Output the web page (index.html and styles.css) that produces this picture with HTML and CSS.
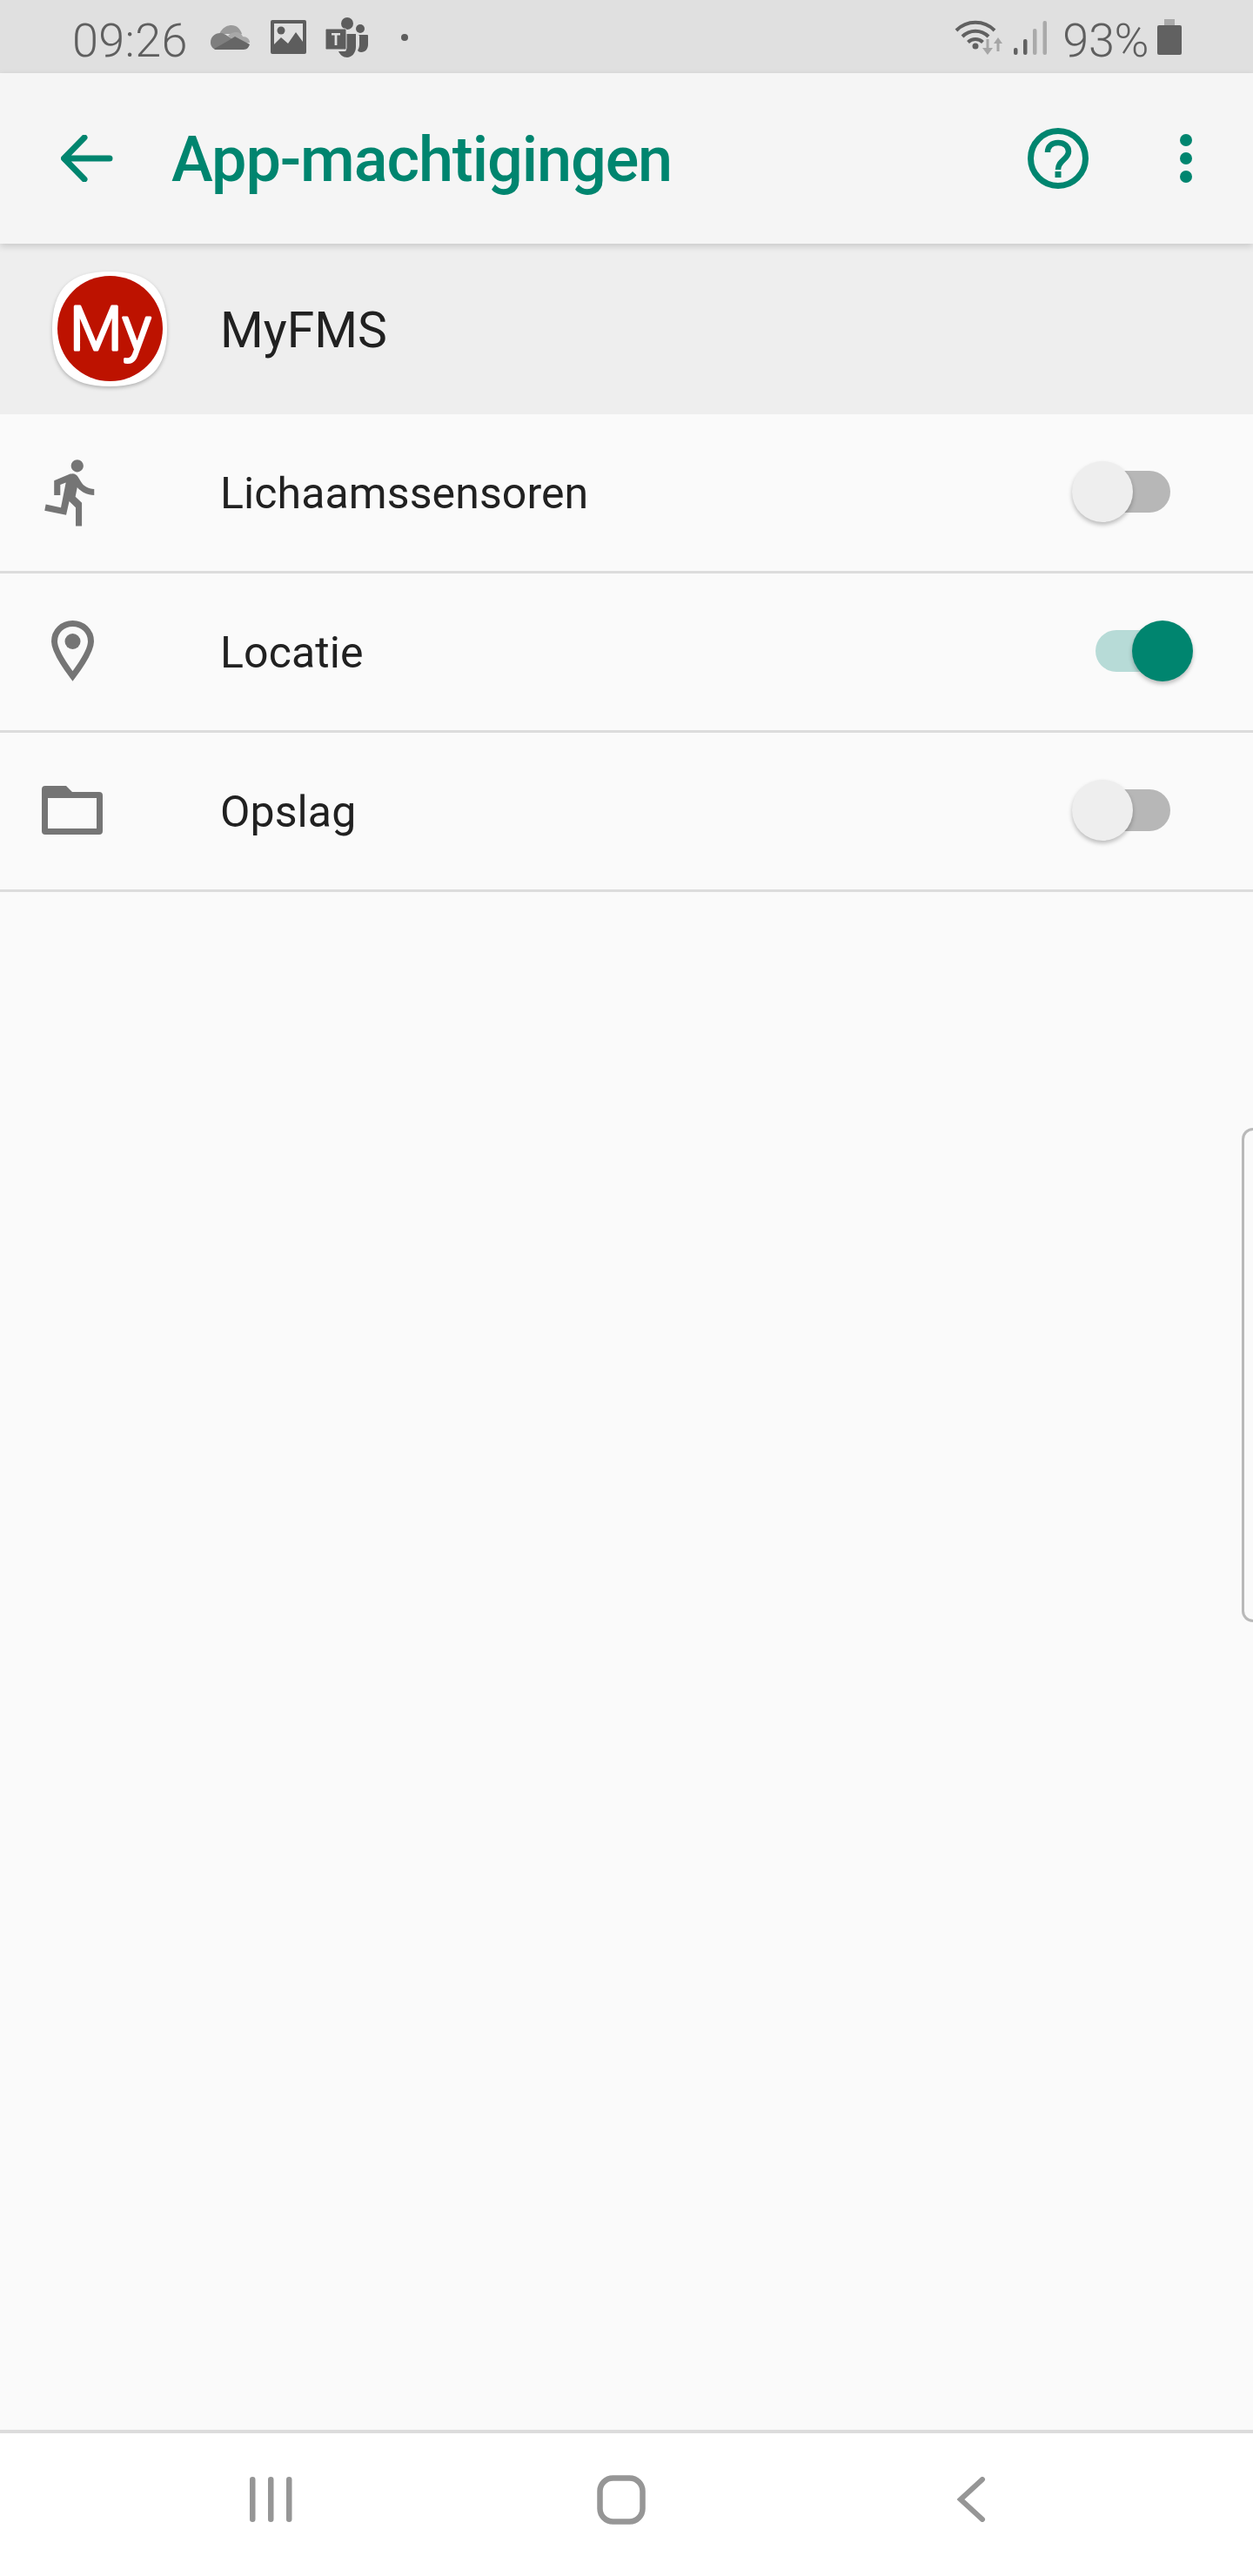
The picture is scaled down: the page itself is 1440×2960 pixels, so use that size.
FILE: index.html
```html
<!DOCTYPE html>
<html lang="nl">
<head>
<meta charset="utf-8">
<title>App-machtigingen</title>
<link rel="stylesheet" href="styles.css">
</head>
<body>
<div class="screen">
  <div class="statusbar">
    <span class="time">09:26</span>
    <svg class="st-cloud" viewBox="0 0 45 28"><path fill="#9a9a9a" d="M10 10C13 3 19 0 24 0c6 0 10 4 12 10z"/><path fill="#7e7e7e" d="M0 20C0 13 5 9 11 9c3 0 5 1 8 3l13 8-12 8H7c-4 0-7-4-7-8z"/><path fill="#a8a8a8" d="M20 12c3-3 6-4 9-4 4 0 7 2 8 5 5 0 8 3 8 7l-13 2z"/><path fill="#666" d="M4 27l16-9 8-5 17 9c-1 3-3 6-7 6H7c-1 0-2 0-3-1z"/></svg>
    <svg class="st-image" viewBox="0 0 41 39"><path fill="#5d5d5d" fill-rule="evenodd" d="M2 0h37a2 2 0 0 1 2 2v35a2 2 0 0 1-2 2H2a2 2 0 0 1-2-2V2a2 2 0 0 1 2-2zM4 4v24l8-8 8 7 9-13 8 11V4z"/><circle cx="12" cy="12" r="4.5" fill="#5d5d5d"/></svg>
    <svg class="st-teams" viewBox="0 0 49 46"><circle cx="25" cy="7" r="7" fill="#5d5d5d"/><circle cx="40" cy="13" r="5" fill="#5d5d5d"/><path fill="#5d5d5d" d="M38 20h10a1 1 0 0 1 1 1v10c0 5-3 9-8 9-2 0-3-1-4-2 1-2 2-4 2-7V21z"/><path fill="#5d5d5d" d="M24 19h11v15c0 7-5 12-10 12-5 0-8-3-10-7h7a2 2 0 0 0 2-2z"/><rect x="0" y="13" width="24" height="24" rx="1.5" fill="#5d5d5d" stroke="#e0e0e0" stroke-width="1"/><path fill="#e0e0e0" d="M7 18h10v2.600h-3.600V32h-2.800V20.600H7z"/></svg>
    <span class="st-dot"></span>
    <div class="status-right">
      <svg class="st-wifi" viewBox="0 0 58 42"><g fill="none" stroke="#616161" stroke-width="4"><path d="M2 13A31 31 0 0 1 46 13"/><path d="M9 20A21 21 0 0 1 39 20"/><path d="M15.500 26.500A12 12 0 0 1 32.500 26.500"/></g><circle cx="24" cy="31" r="3.500" fill="#616161"/><path fill="#a6a6a6" d="M36.500 23h3v10H44l-6 8-6-8h4.500zM48.500 37V28H45l5-7 5 7h-3.500v9z"/></svg>
      <svg class="st-signal" viewBox="0 0 38 39"><rect x="0" y="31" width="4.500" height="8" rx="2" fill="#616161"/><rect x="11" y="21" width="4.500" height="18" rx="2" fill="#616161"/><rect x="22" y="9" width="4.500" height="30" rx="2" fill="#aaa"/><rect x="33.500" y="0" width="4.500" height="39" rx="2" fill="#aaa"/></svg>
      <span class="battery-pct">93%</span>
      <svg class="st-battery" viewBox="0 0 28 41"><path fill="#aaa" d="M8 0h12v7H8z"/><rect y="7" width="28" height="34" rx="2" fill="#616161"/></svg>
    </div>
  </div>

  <header class="toolbar">
    <svg class="tb-back" viewBox="0 0 60 54"><path fill="none" stroke="#00856f" stroke-width="7" stroke-linecap="round" stroke-linejoin="round" d="M56 27H4M27 3L3.500 27 27 51"/></svg>
    <h1 class="title">App-machtigingen</h1>
    <svg class="tb-help" viewBox="0 0 70 70"><circle cx="35" cy="35" r="31.500" fill="none" stroke="#00856f" stroke-width="7"/><path fill="none" stroke="#00856f" stroke-width="6.500" d="M23 28c0-7 5-11 12-11s12 4 12 10c0 9-12 10-12 21"/><rect x="31.500" y="50" width="7" height="7" fill="#00856f"/></svg>
    <div class="tb-more"><span></span><span></span><span></span></div>
  </header>

  <section class="app-head">
    <svg class="app-logo" viewBox="0 0 132 132"><path fill="#fff" d="M66 0C112 0 132 20 132 66S112 132 66 132 0 112 0 66 20 0 66 0z"/><circle cx="66.500" cy="65.500" r="60.500" fill="#bd1200"/><text x="20" y="90" class="logo-text">My</text></svg>
    <span class="app-name">MyFMS</span>
  </section>

  <div class="list">
    <div class="row">
      <div class="row-icon"><svg class="ic-run" viewBox="0 0 24 24"><path fill="#757575" d="M13.490 5.480c1.100 0 2-.9 2-2s-.9-2-2-2-2 .9-2 2 .9 2 2 2zm-3.600 13.900l1-4.400 2.100 2v6h2v-7.500l-2.100-2 .6-3c1.300 1.500 3.300 2.500 5.500 2.500v-2c-1.900 0-3.500-1-4.300-2.400l-1-1.600c-.4-.6-1-1-1.700-1-.3 0-.5.100-.8.100l-5.200 2.200v4.700h2v-3.400l1.800-.7-1.600 8.100-4.900-1-.4 2 7 1.400z"/></svg></div>
      <span class="row-label">Lichaamssensoren</span>
      <div class="switch"><span class="track"></span><span class="thumb"></span></div>
    </div>
    <div class="row">
      <div class="row-icon"><svg class="ic-pin" viewBox="0 0 49 70"><path fill="none" stroke="#757575" stroke-width="7" stroke-miterlimit="8" d="M24.500 3.500C13 3.500 3.500 12 3.500 24c0 10 10.500 26 21 40 10.500-14 21-30 21-40 0-12-9.500-20.500-21-20.500z"/><circle cx="24.500" cy="24" r="9" fill="#757575"/></svg></div>
      <span class="row-label">Locatie</span>
      <div class="switch on"><span class="track"></span><span class="thumb"></span></div>
    </div>
    <div class="row">
      <div class="row-icon"><svg class="ic-folder" viewBox="0 0 70 56"><path fill="#757575" fill-rule="evenodd" d="M4 0h24l7 7h31a4 4 0 0 1 4 4v41a4 4 0 0 1-4 4H4a4 4 0 0 1-4-4V4a4 4 0 0 1 4-4zM7 14v35h56V14z"/></svg></div>
      <span class="row-label">Opslag</span>
      <div class="switch"><span class="track"></span><span class="thumb"></span></div>
    </div>
  </div>

  <div class="edge-handle"></div>

  <nav class="navbar">
    <svg class="nav-recent" viewBox="0 0 49 52"><g fill="#969696"><rect width="6.500" height="52" rx="3.200"/><rect x="21" width="6.500" height="52" rx="3.200"/><rect x="42" width="6.500" height="52" rx="3.200"/></g></svg>
    <svg class="nav-home" viewBox="0 0 56 57"><rect x="3.500" y="3.500" width="49" height="50" rx="15" fill="none" stroke="#969696" stroke-width="6.500"/></svg>
    <svg class="nav-back" viewBox="0 0 33 52"><path fill="none" stroke="#969696" stroke-width="6" stroke-linecap="round" stroke-linejoin="miter" d="M29 3L4 26l25 23"/></svg>
  </nav>
</div>
</body>
</html>
```

FILE: styles.css
```css
* { box-sizing: border-box; }
html, body { margin: 0; padding: 0; }
body { background: #fafafa; font-family: Roboto, "Noto Sans", sans-serif; }
svg { display: block; flex: none; }

.screen {
  position: relative;
  width: 1440px;
  height: 2960px;
  display: flex;
  flex-direction: column;
  background: #fafafa;
  overflow: hidden;
}

/* status bar */
.statusbar {
  height: 84px;
  flex: none;
  background: #e0e0e0;
  display: flex;
  align-items: flex-start;
  padding-left: 81px;
  color: #5f5f5f;
}
.time {
  font-weight: 300;
  font-size: 54px;
  line-height: 63px;
  margin: 15px 0 0 2px;
  letter-spacing: .3px;
}
.battery-pct {
  font-weight: 300;
  font-size: 54px;
  line-height: 63px;
  margin: 15px 0 0 18px;
  letter-spacing: -.4px;
}
.st-cloud { width: 45px; height: 28px; margin: 29px 0 0 26px; }
.st-image { width: 41px; height: 39px; margin: 23px 0 0 24px; }
.st-teams { width: 49px; height: 46px; margin: 20px 0 0 22px; }
.st-dot { width: 8px; height: 8px; border-radius: 50%; background: #5d5d5d; margin: 39px 0 0 38px; }
.status-right { margin-left: auto; display: flex; align-items: flex-start; padding-right: 82px; }
.st-wifi { width: 58px; height: 42px; margin-top: 22px; }
.st-signal { width: 38px; height: 39px; margin: 24px 0 0 10px; }
.st-battery { width: 28px; height: 41px; margin: 22px 0 0 10px; }

/* toolbar */
.toolbar {
  position: relative;
  z-index: 1;
  height: 196px;
  flex: none;
  background: #f5f5f5;
  display: flex;
  align-items: center;
  padding: 0 70px;
  box-shadow: 0 3px 8px rgba(0, 0, 0, .16);
}
.tb-back { width: 60px; height: 54px; }
.title {
  margin: 3px 0 0 67px;
  font-size: 72px;
  line-height: 84px;
  font-weight: 500;
  letter-spacing: -1.1px;
  color: #00856f;
  white-space: nowrap;
}
.tb-help { width: 70px; height: 70px; margin-left: auto; }
.tb-more {
  width: 14px;
  margin-left: 105px;
  display: flex;
  flex-direction: column;
  gap: 7px;
}
.tb-more span { display: block; width: 14px; height: 14px; border-radius: 50%; background: #00856f; }

/* app header */
.app-head {
  height: 196px;
  flex: none;
  background: #eeeeee;
  display: flex;
  align-items: center;
  padding-left: 60px;
}
.app-logo { width: 132px; height: 132px; filter: drop-shadow(0 2px 2px rgba(0, 0, 0, .25)); }
.logo-text {
  font-family: Roboto, sans-serif;
  font-size: 70px;
  font-weight: 300;
  fill: #fff;
  stroke: #fff;
  stroke-width: 3px;
  stroke-linejoin: round;
}
.app-name { margin: 3px 0 0 61px; font-size: 57px; line-height: 66px; color: #212121; }

/* list */
.list { flex: 1; }
.row {
  height: 183px;
  display: flex;
  align-items: center;
  padding: 0 69px 2px 40px;
  border-bottom: 3px solid #dcdcdc;
}
.row-icon { width: 86px; height: 86px; flex: none; display: flex; align-items: center; justify-content: center; }
.ic-run { width: 85px; height: 85px; }
.ic-pin { width: 49px; height: 70px; }
.ic-folder { width: 70px; height: 56px; }
.row-label { margin: 4px 0 0 127px; font-size: 50px; line-height: 58px; color: #212121; letter-spacing: .1px; }

.switch { position: relative; width: 139px; height: 70px; margin-left: auto; }
.track {
  position: absolute;
  left: 27px;
  top: 11px;
  width: 86px;
  height: 48px;
  border-radius: 24px;
  background: #b7b7b7;
}
.thumb {
  position: absolute;
  left: 0;
  top: 0;
  width: 70px;
  height: 70px;
  border-radius: 50%;
  background: #eeeeee;
  box-shadow: 0 3px 5px rgba(0, 0, 0, .25);
}
.switch.on .track { background: #b7dbd7; }
.switch.on .thumb { left: 69px; background: #00856f; }

/* edge panel handle */
.edge-handle {
  position: absolute;
  left: 1427px;
  top: 1296px;
  width: 13px;
  height: 568px;
  border: 3px solid #b9b9b9;
  border-right: 0;
  border-radius: 16px 0 0 16px;
}

/* nav bar */
.navbar {
  height: 168px;
  flex: none;
  background: #fff;
  border-top: 4px solid #dcdcdc;
  display: flex;
  align-items: center;
  padding: 0 0 12px 287px;
}
.nav-recent { width: 49px; height: 52px; }
.nav-home { width: 56px; height: 57px; margin-left: 350px; }
.nav-back { width: 33px; height: 52px; margin-left: 358px; }
```
